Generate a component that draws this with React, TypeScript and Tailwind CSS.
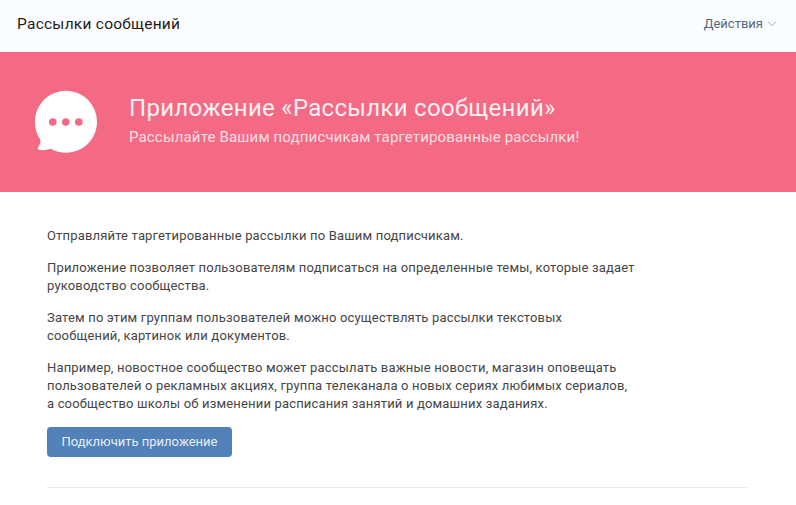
import React from 'react';
import { ChevronDown } from 'lucide-react';

const BubbleIcon: React.FC = () => (
  <svg width="64" height="64" viewBox="0 0 64 64" className="shrink-0">
    <path
      d="M32 .8C49.200.8 63 14.600 63 31.800S49.200 62.800 32 62.800c-5.600 0-10.800-1.500-15.300-4-2.800 1.100-6.800 1.600-10.500 1.300-2.300-.2-3-1.900-1.800-3.300 1.800-2 2.500-4.500 1.900-7.200C2.600 44.800 1 38.500 1 31.800 1 14.600 14.800.8 32 .8Z"
      fill="#ffffff"
    />
    <circle cx="18.800" cy="32" r="3.800" fill="#f46983" />
    <circle cx="31.800" cy="32" r="3.800" fill="#f46983" />
    <circle cx="44.800" cy="32" r="3.800" fill="#f46983" />
  </svg>
);

export default function App() {
  return (
    <div className="w-[796px] h-[505px] overflow-hidden bg-white font-['Roboto',sans-serif]">
      <div className="h-[52px] pb-[3px] bg-[#fbfcfe] flex items-center justify-between pl-[17px] pr-[17px]">
        <h1 className="text-[15.500px] text-[#1c1c1c] tracking-[0.25px]">Рассылки сообщений</h1>
        <button className="flex items-center gap-[2px] mb-[1px] text-[13px] text-[#55677d]">
          Действия
          <ChevronDown size={14} strokeWidth={1.5} className="text-[#92a0b1]" />
        </button>
      </div>

      <div className="h-[140px] bg-[#f46983] flex items-center pl-[34px]">
        <BubbleIcon />
        <div className="ml-[31px] mt-[-5px]">
          <div className="text-[24px] leading-[30px] text-[#fff0f3] tracking-[0.3px]">
            Приложение «Рассылки сообщений»
          </div>
          <div className="text-[15px] leading-[20px] mt-[4px] text-[#fde0e5] tracking-[0.16px]">
            Рассылайте Вашим подписчикам таргетированные рассылки!
          </div>
        </div>
      </div>

      <div className="pt-[35px] pl-[47px] pr-[49px] text-[13px] leading-[18px] text-[#454545] tracking-[0.17px]">
        <p>Отправляйте таргетированные рассылки по Вашим подписчикам.</p>
        <p className="mt-[14px]">
          Приложение позволяет пользователям подписаться на определенные темы, которые задает
          <br />
          руководство сообщества.
        </p>
        <p className="mt-[14px]">
          Затем по этим группам пользователей можно осуществлять рассылки текстовых
          <br />
          сообщений, картинок или документов.
        </p>
        <p className="mt-[14px]">
          Например, новостное сообщество может рассылать важные новости, магазин оповещать
          <br />
          пользователей о рекламных акциях, группа телеканала о новых сериях любимых сериалов,
          <br />
          а сообщество школы об изменении расписания занятий и домашних заданиях.
        </p>
        <button className="mt-[14px] h-[30px] w-[185px] rounded-[4px] bg-[#5181b8] text-[13px] text-[#e6eef6] tracking-normal">
          Подключить приложение
        </button>
        <div className="mt-[30px] h-px bg-[#e7e8ec]" />
      </div>
    </div>
  );
}
